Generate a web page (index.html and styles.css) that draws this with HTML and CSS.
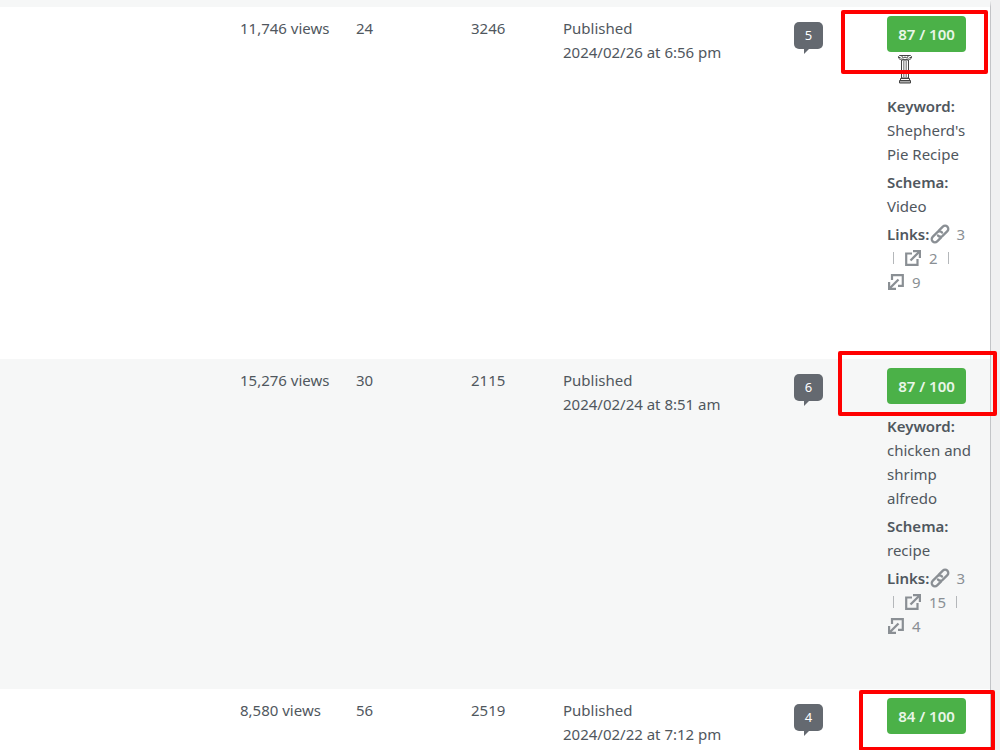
FILE: index.html
```html
<!DOCTYPE html>
<html lang="en">
<head>
  <meta charset="UTF-8">
  <meta name="viewport" content="width=device-width, initial-scale=1.0">
  <title>Posts</title>
  <link rel="stylesheet" href="styles.css">
</head>
<body>

  <!-- Icons -->
  <svg class="sprite" aria-hidden="true">
    <symbol id="icon-link" viewBox="0 0 20 20">
      <g fill="none" stroke="currentColor" stroke-width="2.3" stroke-linecap="round" transform="rotate(-45 10 10)">
        <path d="M8.500 13.200H2.800a3.200 3.200 0 0 1 0-6.400h6.700a3.200 3.200 0 0 1 3 3.600"/>
        <path d="M11.500 6.800h5.700a3.200 3.200 0 0 1 0 6.400h-6.700a3.200 3.200 0 0 1-3-3.600"/>
      </g>
    </symbol>
    <symbol id="icon-external" viewBox="0 0 16 16">
      <path d="M7 3.500H1.200v11.300h11.300V9" fill="none" stroke="currentColor" stroke-width="2.200"/>
      <path d="M5.500 10.500L13.500 2.500" fill="none" stroke="currentColor" stroke-width="2.300"/>
      <path d="M8 0h8v8h-2.200V3.800L12.200 2.200H8z" fill="currentColor"/>
    </symbol>
    <symbol id="icon-incoming" viewBox="0 0 16 16">
      <path d="M4 6V1.200h10.800v10.600H10" fill="none" stroke="currentColor" stroke-width="2.200"/>
      <path d="M10.500 5.500l-8 8" fill="none" stroke="currentColor" stroke-width="2.300"/>
      <path d="M0 8v8h8v-2.200H3.800L2.200 12.200V8z" fill="currentColor"/>
    </symbol>
    <symbol id="icon-pillar" viewBox="0 0 16 30">
      <g fill="#fff" stroke="#444" stroke-width="1">
        <path d="M4.500 6h7v18h-7z"/>
        <path d="M2.500 1.500h11a2 2 0 1 1-2 3.500q-3.500 1.500-7 0a2 2 0 1 1-2-3.500z"/>
        <path d="M3.500 24.500h9v2h-9z"/>
        <path d="M2.500 26.500h11v2.500h-11z" fill="#aaa"/>
      </g>
      <path d="M6.500 7v17M8 7v17M9.500 7v17" stroke="#999"/>
      <path d="M2 3.500h1.500M12.500 3.500H14M5 2q0 3 3 1 3 2 3-1" fill="none" stroke="#444"/>
    </symbol>
  </svg>

  <div class="list-wrap">
    <table class="posts">
      <colgroup>
        <col>
        <col class="col-views">
        <col class="col-count">
        <col class="col-words">
        <col class="col-date">
        <col class="col-comments">
        <col class="col-seo">
      </colgroup>
      <tbody>
        <tr class="row-pillar">
          <td></td>
          <td>11,746 views</td>
          <td>24</td>
          <td>3246</td>
          <td>Published<br>2024/02/26 at 6:56 pm</td>
          <td class="comments"><a href="#" class="bubble">5</a></td>
          <td class="seo">
            <span class="mark mark-first"></span>
            <span class="score">87 / 100</span>
            <svg class="pillar"><use href="#icon-pillar"/></svg>
            <p><strong>Keyword:</strong><br>Shepherd's Pie Recipe</p>
            <p><strong>Schema:</strong><br>Video</p>
            <div class="links">
              <div class="line"><strong>Links:</strong><svg class="chain"><use href="#icon-link"/></svg><span>3</span></div>
              <div class="line outgoing"><svg><use href="#icon-external"/></svg><span>2</span></div>
              <div class="line incoming"><svg><use href="#icon-incoming"/></svg><span>9</span></div>
            </div>
          </td>
        </tr>
        <tr class="row-post alt">
          <td></td>
          <td>15,276 views</td>
          <td>30</td>
          <td>2115</td>
          <td>Published<br>2024/02/24 at 8:51 am</td>
          <td class="comments"><a href="#" class="bubble">6</a></td>
          <td class="seo">
            <span class="mark mark-second"></span>
            <span class="score">87 / 100</span>
            <p><strong>Keyword:</strong><br>chicken and shrimp alfredo</p>
            <p><strong>Schema:</strong><br>recipe</p>
            <div class="links">
              <div class="line"><strong>Links:</strong><svg class="chain"><use href="#icon-link"/></svg><span>3</span></div>
              <div class="line outgoing"><svg><use href="#icon-external"/></svg><span>15</span></div>
              <div class="line incoming"><svg><use href="#icon-incoming"/></svg><span>4</span></div>
            </div>
          </td>
        </tr>
        <tr>
          <td></td>
          <td>8,580 views</td>
          <td>56</td>
          <td>2519</td>
          <td>Published<br>2024/02/22 at 7:12 pm</td>
          <td class="comments"><a href="#" class="bubble">4</a></td>
          <td class="seo">
            <span class="mark mark-third"></span>
            <span class="score">84 / 100</span>
          </td>
        </tr>
      </tbody>
    </table>
  </div>

</body>
</html>
```
FILE: styles.css
```css
:root {
  --text: #50575e;
  --muted: #8a8f94;
  --stripe: #f6f7f7;
  --green: #4bb148;
}

* {
  box-sizing: border-box;
}

body {
  margin: 0;
  background: #f0f0f1;
  color: var(--text);
  font-family: "Noto Sans", "Open Sans", sans-serif;
  font-size: 15px;
  line-height: 24px;
  overflow: hidden;
}

.sprite {
  display: none;
}

.list-wrap {
  min-height: 100vh;
  margin-right: 9px;
  background: #fff;
  border-top: 7px solid var(--stripe);
  border-right: 1px solid #c3c4c7;
}

.posts {
  width: 100%;
  border-collapse: collapse;
  table-layout: fixed;
}

.col-views { width: 116px; }
.col-count { width: 115px; }
.col-words { width: 92px; }
.col-date { width: 223px; }
.col-comments { width: 101px; }
.col-seo { width: 103px; }

.posts td {
  padding: 9px 0 0;
  vertical-align: top;
}

.row-pillar { height: 352px; }
.row-post { height: 330px; }

.alt {
  background: var(--stripe);
}

/* Comment count */
.posts .comments {
  padding: 15px 0 0 8px;
}

.bubble {
  display: block;
  position: relative;
  width: 29px;
  height: 27px;
  border-radius: 5px;
  background: #646970;
  color: #fff;
  font-size: 13px;
  line-height: 27px;
  text-align: center;
  text-decoration: none;
}

.bubble::after {
  content: "";
  position: absolute;
  left: 10px;
  top: 26px;
  border-top: 6px solid #646970;
  border-right: 6px solid transparent;
}

/* SEO details */
.posts .seo {
  position: relative;
  padding: 9px 16px 0 0;
}

.score {
  display: block;
  width: 79px;
  margin-bottom: 10px;
  border-radius: 4px;
  background: var(--green);
  color: #e9f6e8;
  font-weight: 600;
  line-height: 36px;
  text-align: center;
}

.pillar {
  display: block;
  width: 16px;
  height: 30px;
  margin: -8px 0 10px 10px;
}

.seo p {
  margin: 0 0 4px;
}

.seo strong {
  font-weight: 600;
}

.line {
  display: flex;
  align-items: center;
  height: 24px;
  color: var(--muted);
}

.line strong {
  margin-right: 1px;
  color: var(--text);
}

.line svg {
  flex: none;
  width: 16px;
  height: 16px;
  margin-right: 8px;
}

.line .chain {
  width: 20px;
  height: 20px;
  margin-right: 6px;
}

.outgoing {
  padding-left: 6px;
}

.outgoing::before,
.outgoing::after {
  content: "";
  width: 1px;
  height: 12px;
  background: #b4b7ba;
}

.outgoing::before { margin-right: 11px; }
.outgoing::after { margin-left: 10px; }

.incoming {
  padding-left: 1px;
}

/* Red highlight boxes */
.mark {
  position: absolute;
  z-index: 2;
  border: 4px solid #f00;
  border-radius: 2px;
}

.mark-first {
  top: 3px;
  left: -46px;
  width: 147px;
  height: 64px;
}

.mark-second {
  top: -8px;
  left: -49px;
  width: 159px;
  height: 65px;
}

.mark-third {
  top: 1px;
  left: -28px;
  width: 136px;
  height: 61px;
}
```
